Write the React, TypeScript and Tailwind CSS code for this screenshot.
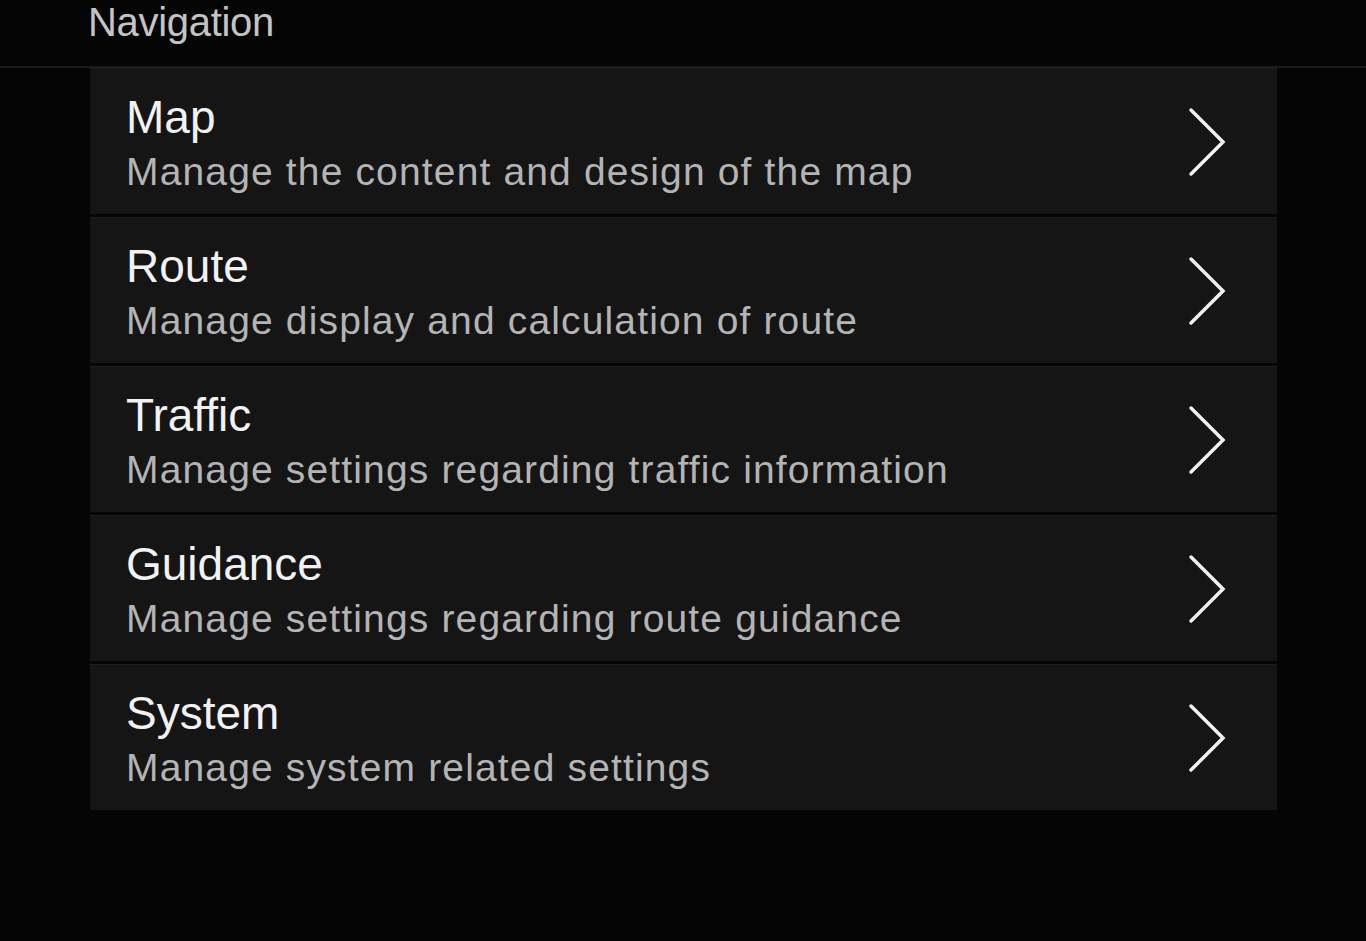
import React from "react";

const items = [
  { title: "Map", sub: "Manage the content and design of the map" },
  { title: "Route", sub: "Manage display and calculation of route" },
  { title: "Traffic", sub: "Manage settings regarding traffic information" },
  { title: "Guidance", sub: "Manage settings regarding route guidance" },
  { title: "System", sub: "Manage system related settings" },
];

function Chevron() {
  return (
    <svg width="40" height="72" viewBox="0 0 40 72" fill="none">
      <path d="M4 4 L36 36 L4 68" stroke="#f2f2f2" strokeWidth="3.5" strokeLinecap="round" strokeLinejoin="miter" />
    </svg>
  );
}

export default function App() {
  return (
    <div
      className="w-[1366px] h-[941px] bg-[#050505] overflow-hidden flex flex-col"
      style={{ fontFamily: '"Liberation Sans", Arial, sans-serif' }}
    >
      <div className="h-[66px] pl-[88px] flex items-start">
        <span className="text-[40px] leading-[44px] text-[#c4c4c4] tracking-[-0.3px]">Navigation</span>
      </div>
      <div className="h-[2px] bg-[#1c1c1c]" />
      <div className="pl-[90px] pr-[89px] flex flex-col gap-[3px]">
        {items.map((it) => (
          <div
            key={it.title}
            className="h-[146px] bg-[#151515] border-t border-[#1e1e1e] flex items-center pl-[36px] pr-[50px]"
          >
            <div className="flex-1 flex flex-col pt-[2px]">
              <span className="text-[46px] leading-[52px] text-[#f2f2f2]">{it.title}</span>
              <span className="text-[39px] leading-[46px] text-[#b4b4b4] tracking-[1.15px] mt-[6px]">{it.sub}</span>
            </div>
            <Chevron />
          </div>
        ))}
      </div>
    </div>
  );
}
